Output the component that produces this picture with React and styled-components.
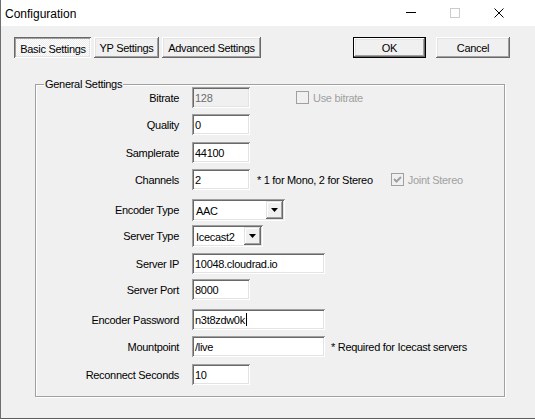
import React from "react";
import styled, { createGlobalStyle, css } from "styled-components";

const Global = createGlobalStyle`
  html, body { margin: 0; padding: 0; background: #f0f0f0; }
  * { box-sizing: border-box; }
`;

/* classic 3D edges */
const raised = css`
  box-shadow: inset -1px -1px 0 #696969, inset 1px 1px 0 #ffffff,
    inset -2px -2px 0 #a0a0a0, inset 2px 2px 0 #e3e3e3;
`;
const sunken = css`
  box-shadow: inset 1px 1px 0 #a0a0a0, inset -1px -1px 0 #ffffff,
    inset 2px 2px 0 #696969, inset -2px -2px 0 #e3e3e3;
`;

const Window = styled.div`
  width: 535px;
  height: 419px;
  border-left: 1px solid #6e6e6e;
  border-bottom: 1px solid #5c5c5c;
  background: #f0f0f0;
  display: flex;
  flex-direction: column;
  font-family: "Liberation Sans", Arial, sans-serif;
  font-size: 11px;
  letter-spacing: -0.3px;
  color: #000;
  overflow: hidden;
`;

const TitleBar = styled.div`
  height: 26px;
  background: #ffffff;
  display: flex;
  align-items: center;
  padding-left: 4px;
  padding-right: 14px;
  flex-shrink: 0;
`;

const Title = styled.div`
  flex: 1;
  font-size: 12px;
  letter-spacing: 0;
  padding-top: 1px;
`;

const CaptionButton = styled.div`
  width: 44px;
  height: 26px;
  display: flex;
  align-items: center;
  justify-content: center;
`;

const Body = styled.div`
  flex: 1;
  display: flex;
  flex-direction: column;
  padding: 11px 25px 0 13px;
`;

const Toolbar = styled.div`
  display: flex;
  align-items: stretch;
  height: 21px;
  gap: 3px;
`;

const Spacer = styled.div`
  flex: 1;
`;

const Button = styled.div`
  width: ${(p) => p.$w}px;
  height: 21px;
  display: flex;
  align-items: center;
  justify-content: center;
  background: #f0f0f0;
  white-space: nowrap;
  padding-top: 1px;
  ${raised}
  ${(p) =>
    p.$pressed &&
    css`
      background: repeating-conic-gradient(#ffffff 0 25%, #ececec 0 50%) 0 0 / 2px 2px;
      box-shadow: inset 1px 1px 0 #696969, inset -1px -1px 0 #ffffff,
        inset 2px 2px 0 #a0a0a0, inset -2px -2px 0 #e3e3e3;
      padding: 2px 0 0 1px;
    `}
  ${(p) =>
    p.$default &&
    css`
      box-shadow: inset 0 0 0 1px #000, inset -2px -2px 0 #696969,
        inset 2px 2px 0 #ffffff, inset -3px -3px 0 #a0a0a0,
        inset 3px 3px 0 #e3e3e3;
    `}
  ${(p) => p.$gapLeft && `margin-left: ${p.$gapLeft}px;`}
`;

const Group = styled.div`
  position: relative;
  margin-top: 26px;
  margin-left: 21px;
  width: 470px;
  height: 313px;
  border: 1px solid #a0a0a0;
  box-shadow: 1px 1px 0 #ffffff, inset 1px 1px 0 #ffffff;
  display: flex;
  flex-direction: column;
`;

const Legend = styled.div`
  position: absolute;
  top: -8px;
  left: 8px;
  padding: 0 1px;
  line-height: 14px;
  background: #f0f0f0;
`;

const Row = styled.div`
  display: flex;
  align-items: center;
  height: ${(p) => p.$h || 21}px;
  margin-top: ${(p) => p.$gap}px;
`;

const Label = styled.div`
  width: 143px;
  margin-right: 13px;
  text-align: right;
  flex-shrink: 0;
  white-space: nowrap;
`;

const Field = styled.div`
  width: ${(p) => p.$w}px;
  height: 21px;
  flex-shrink: 0;
  display: flex;
  align-items: center;
  padding: 0 0 0 3px;
  background: ${(p) => (p.$disabled ? "#f0f0f0" : "#ffffff")};
  color: ${(p) => (p.$disabled ? "#6d6d6d" : "#000")};
  white-space: nowrap;
  ${sunken}
`;

const Caret = styled.span`
  display: inline-block;
  width: 1px;
  height: 13px;
  background: #000;
  margin-left: 1px;
`;

const Select = styled.div`
  width: ${(p) => p.$w}px;
  height: 22px;
  flex-shrink: 0;
  display: flex;
  align-items: center;
  padding: 2px;
  background: #ffffff;
  ${sunken}
`;

const SelectValue = styled.div`
  flex: 1;
  padding: 1px 0 0 2px;
  white-space: nowrap;
`;

const DropButton = styled.div`
  width: 17px;
  height: 18px;
  display: flex;
  align-items: center;
  justify-content: center;
  background: #f0f0f0;
  box-shadow: inset -1px -1px 0 #696969, inset 1px 1px 0 #e3e3e3,
    inset -2px -2px 0 #a0a0a0, inset 2px 2px 0 #ffffff;
`;

const Note = styled.div`
  margin-left: ${(p) => p.$gap}px;
  white-space: nowrap;
`;

const CheckItem = styled.div`
  display: flex;
  align-items: center;
  margin-left: ${(p) => p.$gap}px;
  color: #a0a0a0;
  white-space: nowrap;
`;

const CheckBox = styled.div`
  width: 13px;
  height: 13px;
  margin-right: 4px;
  display: flex;
  align-items: center;
  justify-content: center;
  background: #f0f0f0;
  box-shadow: inset 0 0 0 1px #a0a0a0;
`;

const Arrow = () => (
  <svg width="7" height="4" viewBox="0 0 7 4">
    <polygon points="0,0 7,0 3.5,4" fill="#000" />
  </svg>
);

const Check = () => (
  <svg width="9" height="9" viewBox="0 0 9 9">
    <path d="M1 4 L3.5 6.5 L8 2" fill="none" stroke="#a0a0a0" strokeWidth="2" />
  </svg>
);

const Minimize = () => (
  <svg width="10" height="10" viewBox="0 0 10 10">
    <rect x="0" y="4" width="10" height="1" fill="#000" />
  </svg>
);

const Maximize = () => (
  <svg width="10" height="10" viewBox="0 0 10 10">
    <rect x="0.5" y="0.5" width="9" height="9" fill="none" stroke="#cccccc" />
  </svg>
);

const Close = () => (
  <svg width="10" height="10" viewBox="0 0 10 10">
    <path d="M0.5 0.5 L9.5 9.5 M9.5 0.5 L0.5 9.5" stroke="#000" strokeWidth="1" />
  </svg>
);

export default function App() {
  return (
    <>
      <Global />
      <Window>
        <TitleBar>
          <Title>Configuration</Title>
          <CaptionButton>
            <Minimize />
          </CaptionButton>
          <CaptionButton>
            <Maximize />
          </CaptionButton>
          <CaptionButton>
            <Close />
          </CaptionButton>
        </TitleBar>
        <Body>
          <Toolbar>
            <Button $w={77} $pressed>
              Basic Settings
            </Button>
            <Button $w={65}>YP Settings</Button>
            <Button $w={99}>Advanced Settings</Button>
            <Spacer />
            <Button $w={73} $default>
              OK
            </Button>
            <Button $w={74} $gapLeft={7}>
              Cancel
            </Button>
          </Toolbar>
          <Group>
            <Legend>General Settings</Legend>
            <Row $gap={2}>
              <Label>Bitrate</Label>
              <Field $w={58} $disabled>
                128
              </Field>
              <CheckItem $gap={46}>
                <CheckBox />
                Use bitrate
              </CheckItem>
            </Row>
            <Row $gap={6}>
              <Label>Quality</Label>
              <Field $w={58}>0</Field>
            </Row>
            <Row $gap={7}>
              <Label>Samplerate</Label>
              <Field $w={58}>44100</Field>
            </Row>
            <Row $gap={6}>
              <Label>Channels</Label>
              <Field $w={58}>2</Field>
              <Note $gap={7}>* 1 for Mono, 2 for Stereo</Note>
              <CheckItem $gap={18}>
                <CheckBox>
                  <Check />
                </CheckBox>
                Joint Stereo
              </CheckItem>
            </Row>
            <Row $gap={9} $h={22}>
              <Label>Encoder Type</Label>
              <Select $w={93}>
                <SelectValue>AAC</SelectValue>
                <DropButton>
                  <Arrow />
                </DropButton>
              </Select>
            </Row>
            <Row $gap={4} $h={22}>
              <Label>Server Type</Label>
              <Select $w={71}>
                <SelectValue>Icecast2</SelectValue>
                <DropButton>
                  <Arrow />
                </DropButton>
              </Select>
            </Row>
            <Row $gap={6}>
              <Label>Server IP</Label>
              <Field $w={133}>10048.cloudrad.io</Field>
            </Row>
            <Row $gap={5}>
              <Label>Server Port</Label>
              <Field $w={58}>8000</Field>
            </Row>
            <Row $gap={9}>
              <Label>Encoder Password</Label>
              <Field $w={133}>
                n3t8zdw0k
                <Caret />
              </Field>
            </Row>
            <Row $gap={6}>
              <Label>Mountpoint</Label>
              <Field $w={133}>/live</Field>
              <Note $gap={6}>* Required for Icecast servers</Note>
            </Row>
            <Row $gap={7}>
              <Label>Reconnect Seconds</Label>
              <Field $w={58}>10</Field>
            </Row>
          </Group>
        </Body>
      </Window>
    </>
  );
}
